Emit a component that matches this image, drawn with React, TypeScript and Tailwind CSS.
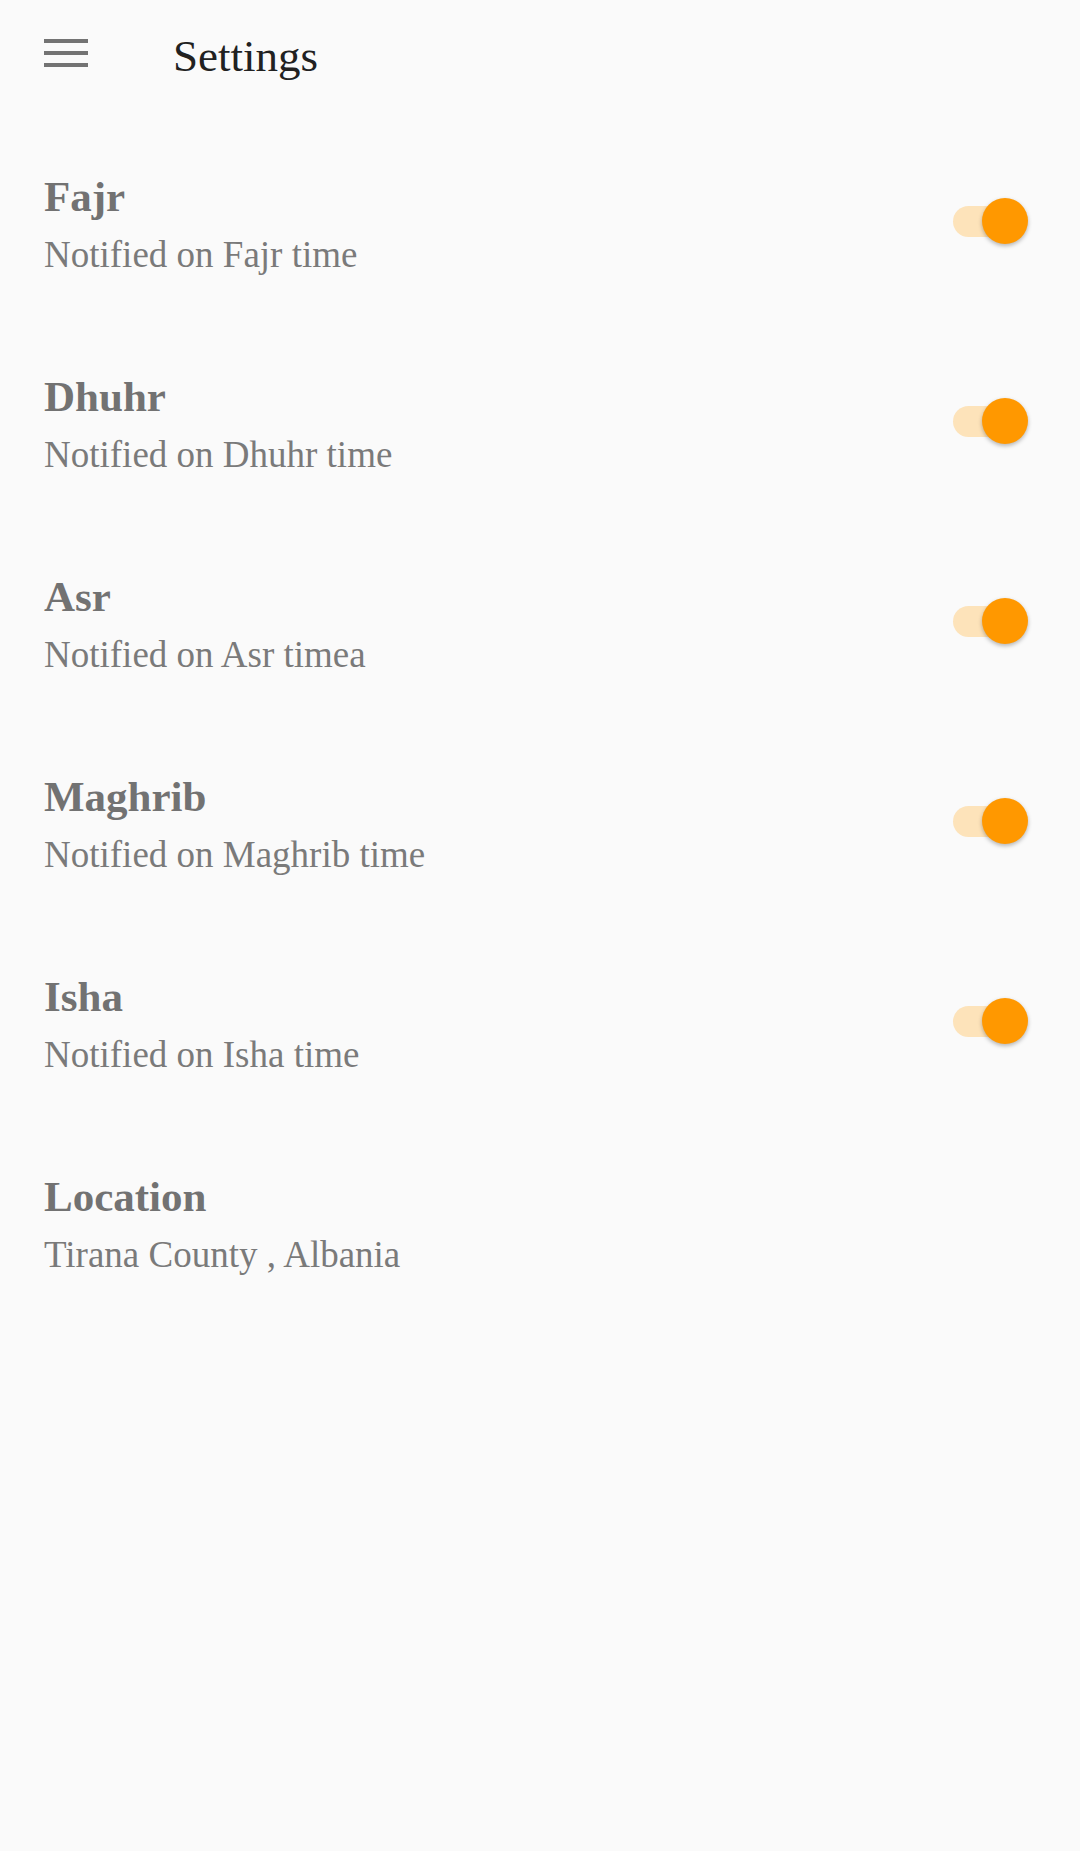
import React from "react";

const serif = { fontFamily: '"Liberation Serif", "DejaVu Serif", serif' };

interface Prayer {
  name: string;
  note: string;
  toggle: boolean;
}

const items: Prayer[] = [
  { name: "Fajr", note: "Notified on Fajr time", toggle: true },
  { name: "Dhuhr", note: "Notified on Dhuhr time", toggle: true },
  { name: "Asr", note: "Notified on Asr timea", toggle: true },
  { name: "Maghrib", note: "Notified on Maghrib time", toggle: true },
  { name: "Isha", note: "Notified on Isha time", toggle: true },
  { name: "Location", note: "Tirana County , Albania", toggle: false },
];

const Toggle = () => (
  <div className="relative w-[75px] h-[46px] shrink-0 -mt-[4px]">
    <div className="absolute left-0 top-[8px] h-[31px] w-[62px] rounded-full bg-[#fde3ba]" />
    <div className="absolute right-0 top-0 h-[46px] w-[46px] rounded-full bg-[#ff9800] shadow-[0_2px_4px_rgba(0,0,0,0.28)]" />
  </div>
);

const App: React.FC = () => {
  return (
    <div className="w-[1080px] h-[1851px] bg-[#fafafa] flex flex-col select-none" style={serif}>
      <div className="h-[106px] flex flex-row items-center pl-[44px]">
        <div className="w-[44px] flex flex-col gap-[8px]">
          <div className="h-[4px] bg-[#737373]" />
          <div className="h-[4px] bg-[#737373]" />
          <div className="h-[4px] bg-[#737373]" />
        </div>
        <div className="ml-[85px] mt-[6px] text-[45px] leading-[46px] text-[#212121]">Settings</div>
      </div>
      <div className="pt-[17px] flex flex-col">
        {items.map((item) => (
          <div key={item.name} className="h-[200px] flex flex-row items-center justify-between pl-[44px] pr-[52px]">
            <div className="flex flex-col">
              <div className="mt-[4px] text-[43px] leading-[48px] font-bold text-[#727272]">{item.name}</div>
              <div className="mt-[12px] text-[37px] leading-[44px] text-[#7a7a7a]">{item.note}</div>
            </div>
            {item.toggle && <Toggle />}
          </div>
        ))}
      </div>
    </div>
  );
};

export default App;
